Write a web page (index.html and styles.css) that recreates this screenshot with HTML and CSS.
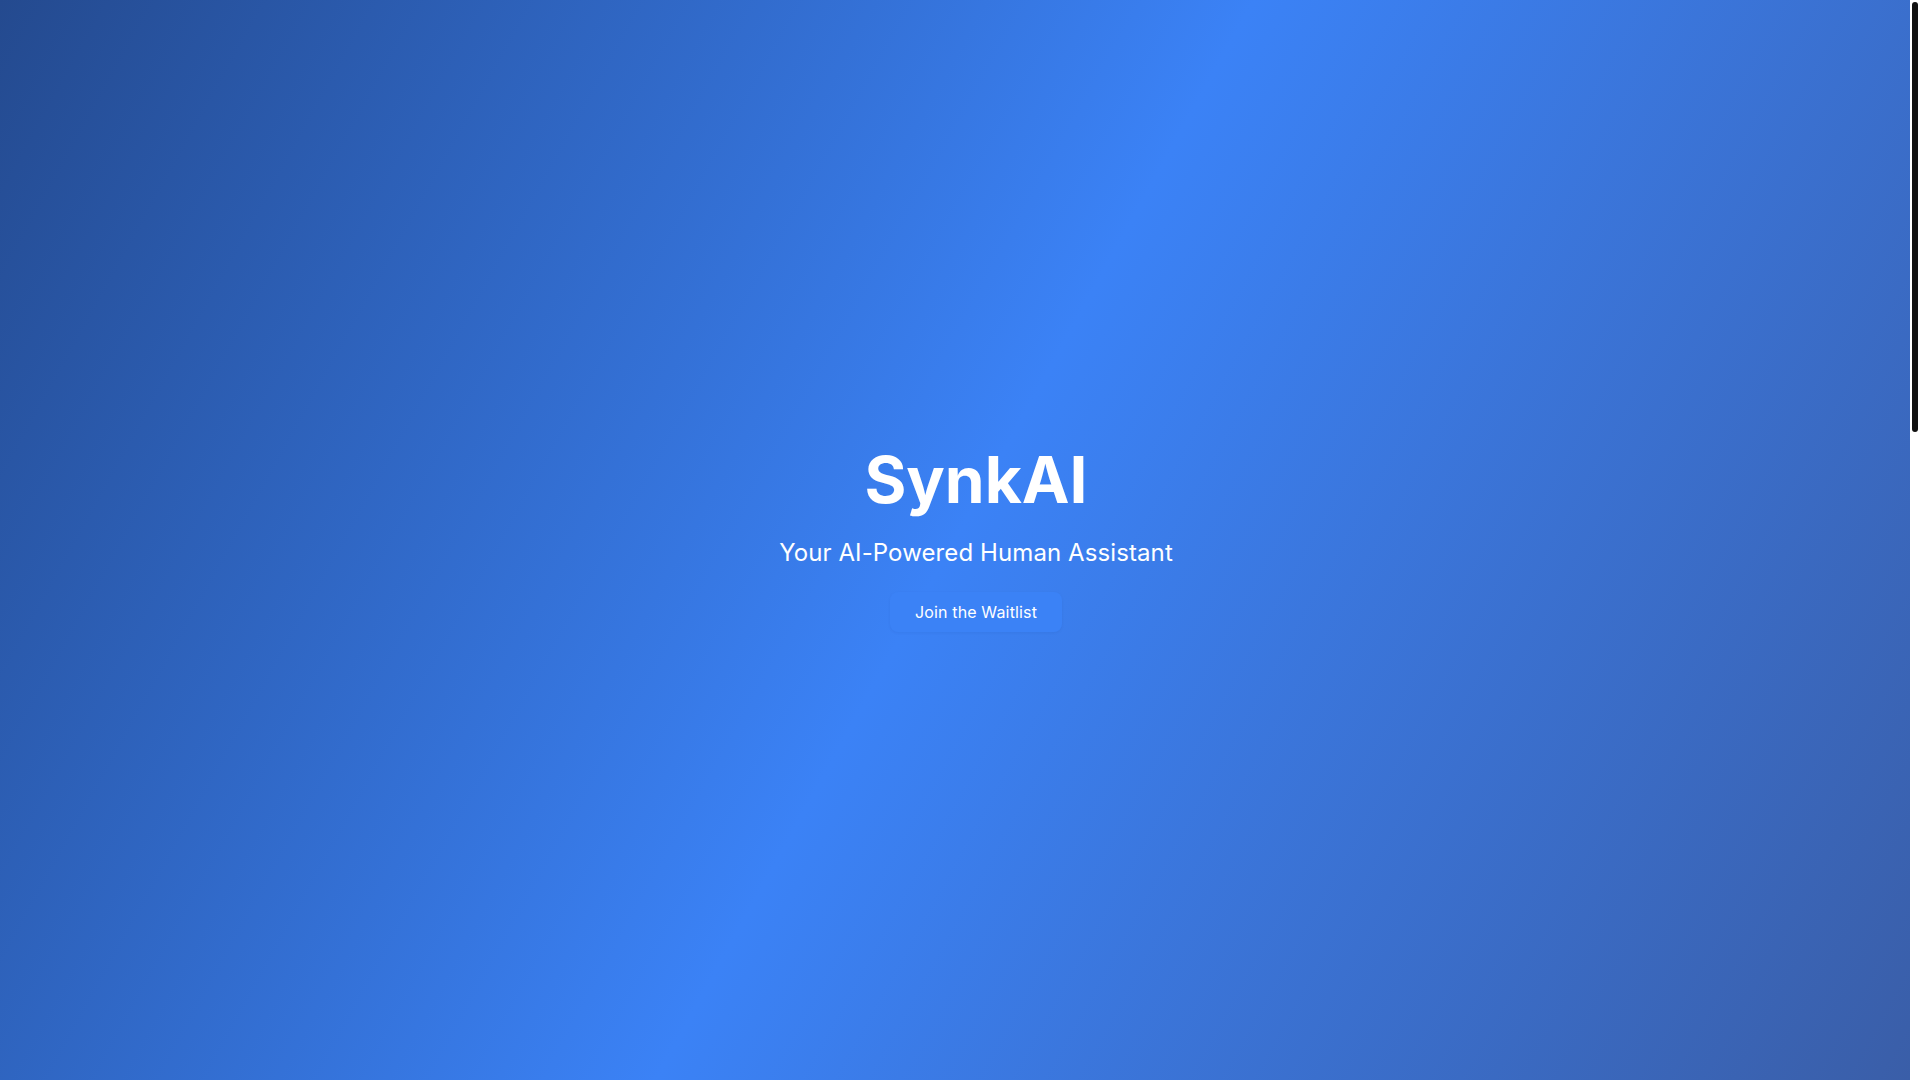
FILE: index.html
```html
<!DOCTYPE html>
<html lang="en">
<head>
<meta charset="utf-8">
<title>SynkAI</title>
<link rel="stylesheet" href="styles.css">
</head>
<body>
<div class="frame">
  <main class="hero">
    <div class="hero-content">
      <h1 class="title">SynkAI</h1>
      <p class="subtitle">Your AI-Powered Human Assistant</p>
      <button class="cta">Join the Waitlist</button>
    </div>
  </main>
  <div class="scrollbar" aria-hidden="true">
    <div class="thumb"></div>
  </div>
</div>
</body>
</html>
```
FILE: styles.css
```css
html, body {
  margin: 0;
  padding: 0;
  height: 100%;
  overflow: hidden;
}
body {
  font-family: Inter, "Noto Sans", sans-serif;
  background: #ffffff;
}
.frame {
  display: flex;
  height: 100vh;
}
.hero {
  flex: 1;
  display: flex;
  align-items: center;
  justify-content: center;
  background: linear-gradient(119deg, #244a8f 0%, #3b82f6 50%, #3a5ea8 100%);
}
.hero-content {
  display: flex;
  flex-direction: column;
  align-items: center;
  padding-left: 42px;
  color: #ffffff;
}
.title {
  margin: 0 0 24px;
  font-size: 64px;
  line-height: 64px;
  font-weight: 700;
}
.subtitle {
  margin: 1px 0 23px;
  font-size: 24px;
  line-height: 32px;
  font-weight: 400;
  letter-spacing: 0.1px;
}
.cta {
  font-family: inherit;
  font-size: 16px;
  line-height: 24px;
  font-weight: 400;
  letter-spacing: 0.15px;
  color: #ffffff;
  background: #3b82f6;
  border: none;
  border-radius: 8px;
  padding: 8px 25px;
  box-shadow: 0 1px 3px rgba(20, 40, 90, 0.06);
  cursor: pointer;
}
.scrollbar {
  width: 10px;
  background: #ffffff;
  display: flex;
  flex-direction: column;
  padding-top: 2px;
}
.thumb {
  margin: 0 2px;
  height: 430px;
  background: #111111;
  border-radius: 3px;
}
```
